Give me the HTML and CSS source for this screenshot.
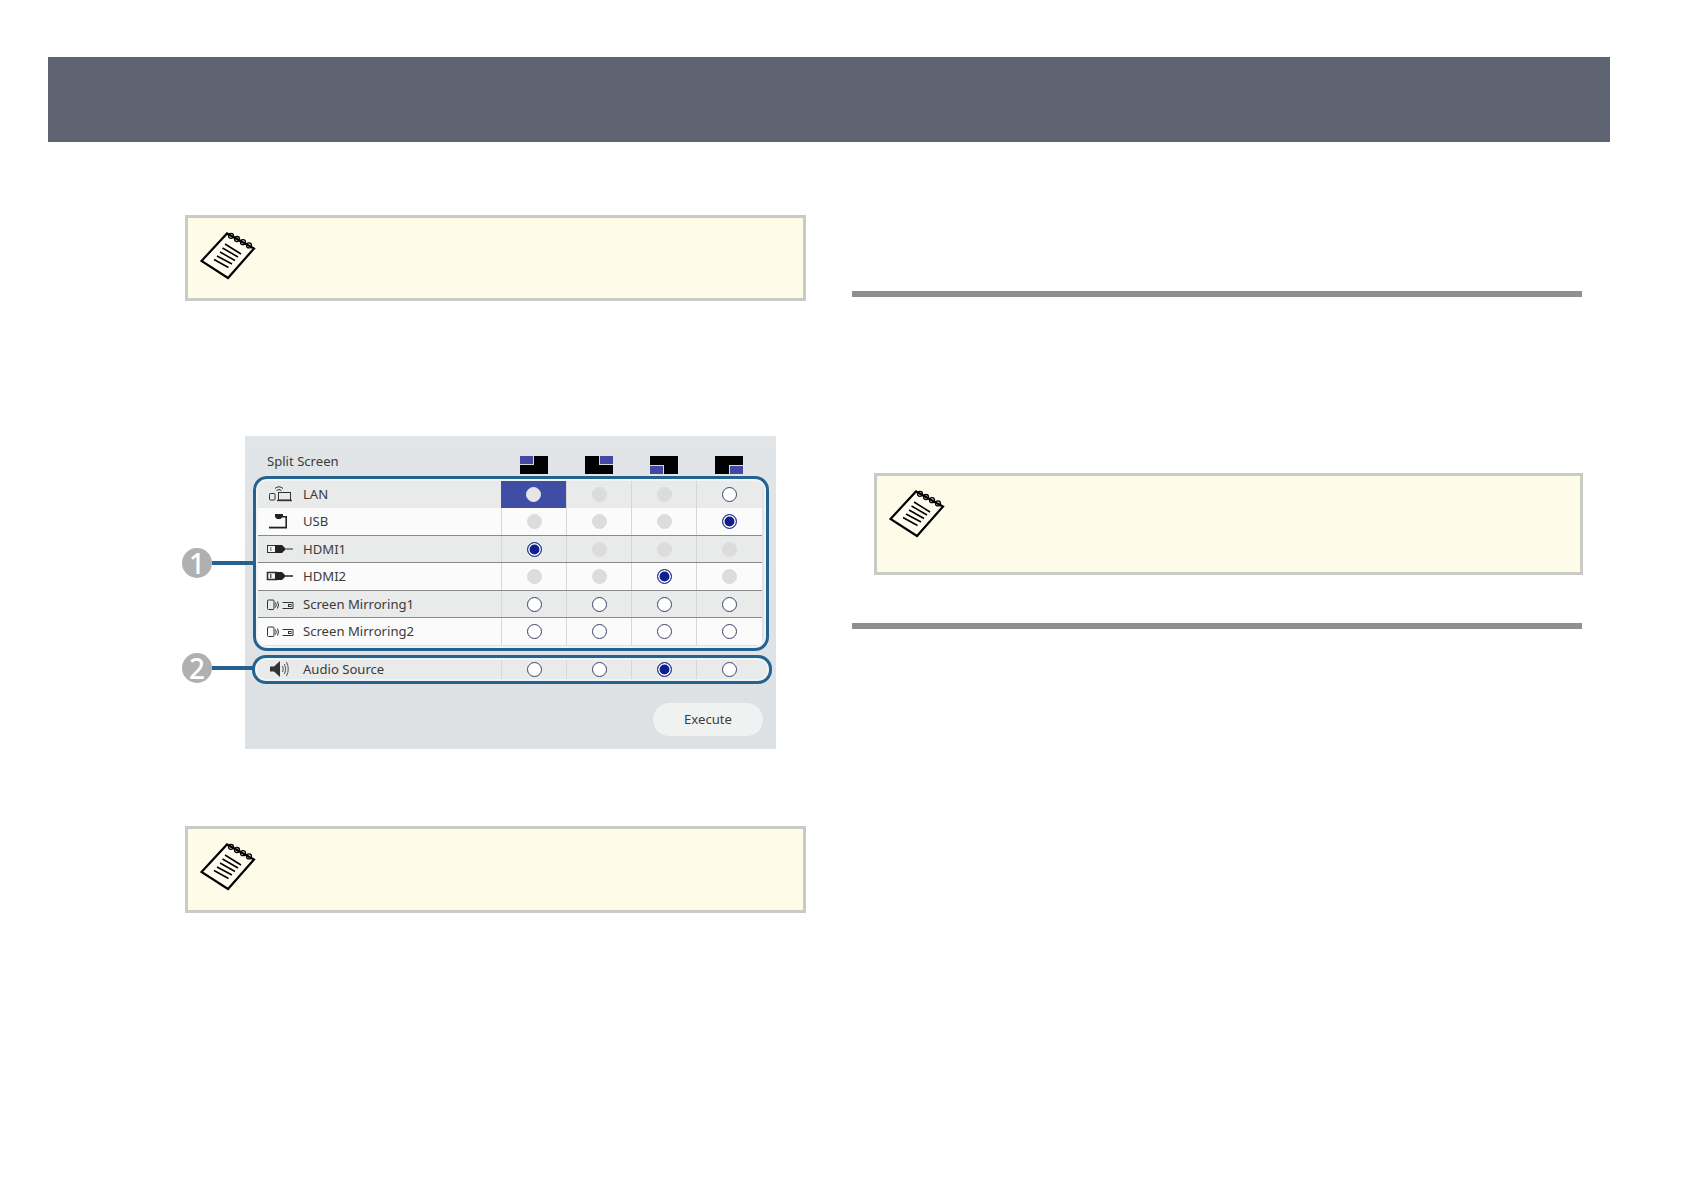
FILE: index.html
```html
<!DOCTYPE html>
<html lang="en">
<head>
<meta charset="utf-8">
<title>Split Screen</title>
<link rel="stylesheet" href="styles.css">
</head>
<body>
<svg class="defs" width="0" height="0" aria-hidden="true">
  <symbol id="note" viewBox="0 0 56 48">
    <path d="M1.5 29 27 1.5 54 16.5 28 46Z" fill="#fffdf0" stroke="#000" stroke-width="2.2" stroke-linejoin="miter"/>
    <g fill="none" stroke="#000" stroke-width="1.3">
      <circle cx="31" cy="3.8" r="2.5"/><circle cx="37" cy="7" r="2.5"/><circle cx="43" cy="10.2" r="2.5"/><circle cx="49" cy="13.4" r="2.5"/>
      <path d="M25 12 41 22M22.5 16 38 25M20 20 35 28.5M17 24 32 32M14 27.5 28.5 35.5" stroke-width="1.5"/>
    </g>
  </symbol>
  <symbol id="i-lan" viewBox="0 0 28 24">
    <g fill="none" stroke="#333" stroke-width="1">
      <path d="M9 6.5Q13 3 17 6.5M10.5 8.5Q13 6.5 15.5 8.5"/>
      <rect x="3.5" y="11.5" width="5.5" height="6.5" rx=".8"/>
      <rect x="12.5" y="10.5" width="12" height="7.5"/>
      <path d="M11 18.5H26" stroke-width="1.4"/>
    </g>
  </symbol>
  <symbol id="i-usb" viewBox="0 0 28 24">
    <path d="M9 5H17V7H21V19H19.4V8.4H16L14.5 10H11L9 8Z" fill="#222"/>
    <path d="M3 18.6H21" stroke="#222" stroke-width="1.8"/>
  </symbol>
  <symbol id="i-hdmi" viewBox="0 0 28 24">
    <rect x="1.5" y="8.5" width="9" height="7" fill="#f4f4f4" stroke="#333"/>
    <path d="M4 11h1.5M4 13h1.5" stroke="#333"/>
    <path d="M9 8H16L19 11V13L16 16H9Z" fill="#222"/>
    <path d="M19 12H27" stroke="#333"/>
  </symbol>
  <symbol id="i-mirror" viewBox="0 0 28 24">
    <g fill="none" stroke="#333" stroke-width="1">
      <rect x="1.5" y="8" width="6.5" height="9.5" rx="1"/>
      <path d="M9.5 10.5Q11 13 9.5 15.5M11.5 9.5Q13.5 13 11.5 16.5"/>
      <path d="M16.5 10.5H27V16.5H16.5"/>
      <rect x="22.5" y="12.5" width="2.5" height="2"/>
    </g>
  </symbol>
  <symbol id="i-audio" viewBox="0 0 28 24">
    <path d="M4 9.5H8L14 4V20L8 14.5H4Z" fill="#333"/>
    <path d="M16.5 9Q18 12 16.5 15M18.5 7Q21 12 18.5 17M20.5 5Q24 12 20.5 19" fill="none" stroke="#444" stroke-width=".9"/>
  </symbol>
</svg>

<header class="banner"></header>

<main class="columns">
  <section class="col-left">
    <aside class="note note-first"><svg class="note-icon"><use href="#note"/></svg></aside>

    <figure class="fig">
      <div class="fig-head">
        <span class="fig-title">Split Screen</span>
        <span class="quad"><i class="q-tl"></i></span>
        <span class="quad"><i class="q-tr"></i></span>
        <span class="quad"><i class="q-bl"></i></span>
        <span class="quad"><i class="q-br"></i></span>
      </div>

      <div class="table">
        <div class="row row-gray">
          <div class="name"><svg class="ico"><use href="#i-lan"/></svg>LAN</div>
          <div class="cell cell-active"><b class="radio radio-focus"></b></div>
          <div class="cell"><b class="radio radio-off"></b></div>
          <div class="cell"><b class="radio radio-off"></b></div>
          <div class="cell"><b class="radio"></b></div>
        </div>
        <div class="row row-white">
          <div class="name"><svg class="ico"><use href="#i-usb"/></svg>USB</div>
          <div class="cell"><b class="radio radio-off"></b></div>
          <div class="cell"><b class="radio radio-off"></b></div>
          <div class="cell"><b class="radio radio-off"></b></div>
          <div class="cell"><b class="radio radio-on"></b></div>
        </div>
        <div class="row row-gray row-line">
          <div class="name"><svg class="ico"><use href="#i-hdmi"/></svg>HDMI1</div>
          <div class="cell"><b class="radio radio-on"></b></div>
          <div class="cell"><b class="radio radio-off"></b></div>
          <div class="cell"><b class="radio radio-off"></b></div>
          <div class="cell"><b class="radio radio-off"></b></div>
        </div>
        <div class="row row-white row-line row-tall">
          <div class="name"><svg class="ico ico-bold"><use href="#i-hdmi"/></svg>HDMI2</div>
          <div class="cell"><b class="radio radio-off"></b></div>
          <div class="cell"><b class="radio radio-off"></b></div>
          <div class="cell"><b class="radio radio-on"></b></div>
          <div class="cell"><b class="radio radio-off"></b></div>
        </div>
        <div class="row row-gray row-line">
          <div class="name"><svg class="ico"><use href="#i-mirror"/></svg>Screen Mirroring1</div>
          <div class="cell"><b class="radio"></b></div>
          <div class="cell"><b class="radio"></b></div>
          <div class="cell"><b class="radio"></b></div>
          <div class="cell"><b class="radio"></b></div>
        </div>
        <div class="row row-white row-line row-tall">
          <div class="name"><svg class="ico"><use href="#i-mirror"/></svg>Screen Mirroring2</div>
          <div class="cell"><b class="radio"></b></div>
          <div class="cell"><b class="radio"></b></div>
          <div class="cell"><b class="radio"></b></div>
          <div class="cell"><b class="radio"></b></div>
        </div>
      </div>

      <div class="audio">
        <div class="name"><svg class="ico"><use href="#i-audio"/></svg>Audio Source</div>
        <div class="cell"><b class="radio"></b></div>
        <div class="cell"><b class="radio"></b></div>
        <div class="cell"><b class="radio radio-on"></b></div>
        <div class="cell"><b class="radio"></b></div>
      </div>

      <div class="fig-foot"><span class="execute">Execute</span></div>

      <span class="frame frame-table"></span>
      <span class="frame frame-audio"></span>
      <span class="callout callout-1"><span class="badge">1</span><span class="wire"></span></span>
      <span class="callout callout-2"><span class="badge">2</span><span class="wire"></span></span>
    </figure>

    <aside class="note note-last"><svg class="note-icon"><use href="#note"/></svg></aside>
  </section>

  <section class="col-right">
    <hr class="rule rule-first">
    <aside class="note note-right"><svg class="note-icon"><use href="#note"/></svg></aside>
    <hr class="rule rule-second">
  </section>
</main>
</body>
</html>
```

FILE: styles.css
```css
* { box-sizing: border-box; }

html, body {
  margin: 0;
  background: #fff;
}

body {
  padding-top: 57px;
  font-family: "Noto Sans", "Open Sans", sans-serif;
  color: #3c3c3c;
  min-height: 1191px;
}

.defs { display: block; height: 0; }

.banner {
  height: 85px;
  width: 1562px;
  margin-left: 48px;
  background: #5f6472;
}

.columns {
  display: flex;
  padding-left: 185px;
}

.col-left { width: 621px; }

.col-right {
  width: 731px;
  margin-left: 46px;
}

/* notes */
.note {
  display: flex;
  align-items: flex-start;
  padding: 14px 0 0 12px;
  background: #fefbe9;
  border: 3px solid #cbcbc6;
}

.note-first { margin-top: 73px; height: 86px; }
.note-last { margin-top: 77px; height: 87px; }
.note-right {
  margin: 176px 0 0 22px;
  width: 709px;
  height: 102px;
}

.note-icon {
  width: 56px;
  height: 48px;
}

/* rules */
.rule {
  height: 6px;
  margin: 0;
  border: 0;
  background: #8f8f8f;
  width: 730px;
}

.rule-first { margin-top: 149px; }
.rule-second { margin-top: 48px; }

/* figure */
.fig {
  position: relative;
  width: 531px;
  height: 313px;
  margin: 135px 0 0 60px;
  padding: 20px 13px 0 13px;
  background: linear-gradient(180deg, #e1e5e8, #dde1e4);
  font-size: 13.1px;
}

.fig-head {
  display: grid;
  grid-template-columns: 243px 65px 65px 65px 66px;
  height: 25px;
  justify-items: center;
  align-items: start;
}

.fig-title {
  justify-self: start;
  padding-left: 9px;
  line-height: 11px;
}

.quad {
  display: flex;
  width: 28px;
  height: 18px;
  background: #000;
}

.quad i {
  display: block;
  width: 14px;
  height: 9px;
  background: #4349a0;
}

.q-tr { margin-left: auto; }
.q-bl { margin-top: auto; }
.q-br { margin: auto 0 0 auto; }

.quad i.q-tl { border: solid #d5d8dc; border-width: 0 1px 1px 0; }
.quad i.q-tr { border: solid #d5d8dc; border-width: 0 0 1px 1px; }
.quad i.q-bl { border: solid #d5d8dc; border-width: 1px 1px 0 0; }
.quad i.q-br { border: solid #d5d8dc; border-width: 1px 0 0 1px; }

.table { width: 504px; }

.row {
  display: grid;
  grid-template-columns: 243px 65px 65px 65px 66px;
  height: 27px;
}

.row-tall { height: 28px; }
.row-gray { background: #e9eaea; }
.row-white { background: #fbfbfb; }
.row-line { border-top: 1px solid #8a8a8a; }

.name {
  display: flex;
  align-items: center;
  gap: 9px;
  padding: 0 0 1px 8px;
  white-space: nowrap;
}

.ico {
  flex: none;
  width: 28px;
  height: 24px;
}

.ico-bold { stroke-width: 1.6; }

.cell {
  display: flex;
  align-items: center;
  justify-content: center;
  border-left: 1px solid #d6d7d7;
}

.cell-active {
  background: #3f4ea4;
  border-left: 0;
}

.radio {
  display: block;
  width: 15px;
  height: 15px;
  border-radius: 50%;
  background: #fff;
  border: 1px solid #3d4166;
}

.radio-off {
  background: #dcdcdc;
  border-color: #dcdcdc;
}

.radio-focus {
  background: #e6e6e6;
  border-color: #e6e6e6;
}

.radio-on {
  background: #0f1f8c;
  border: 1px solid #26348f;
  box-shadow: inset 0 0 0 1.5px #fff;
}

.audio {
  display: grid;
  grid-template-columns: 246px 65px 65px 65px 66px;
  grid-template-rows: 21px;
  width: 514px;
  height: 21px;
  margin: 14px 0 0 -3px;
  padding-right: 7px;
  background: #e9eaea;
  border-radius: 10px;
}

.audio .name { padding-left: 11px; }

.fig-foot {
  display: flex;
  justify-content: flex-end;
  margin-top: 23px;
}

.execute {
  display: flex;
  align-items: center;
  justify-content: center;
  width: 110px;
  height: 33px;
  padding-bottom: 1px;
  border-radius: 17px;
  background: #f0f1f1;
}

/* overlays */
.frame {
  position: absolute;
  border: 3px solid #24628f;
  box-shadow: inset 0 0 0 2px #eef4f8;
}

.frame-table {
  left: 8px;
  top: 40px;
  width: 516px;
  height: 175px;
  border-radius: 14px;
}

.frame-audio {
  left: 7px;
  top: 219px;
  width: 520px;
  height: 29px;
  border-radius: 14px;
}

.callout {
  position: absolute;
  left: -63px;
  display: flex;
  align-items: center;
}

.callout-1 { top: 112px; }
.callout-2 { top: 217px; }

.badge {
  display: flex;
  align-items: center;
  justify-content: center;
  width: 30px;
  height: 30px;
  border-radius: 50%;
  background: #b0b0b0;
  color: #fff;
  font-size: 28px;
  font-weight: 500;
  line-height: 1;
}

.wire {
  width: 41px;
  height: 4px;
  background: #24628f;
}
```
